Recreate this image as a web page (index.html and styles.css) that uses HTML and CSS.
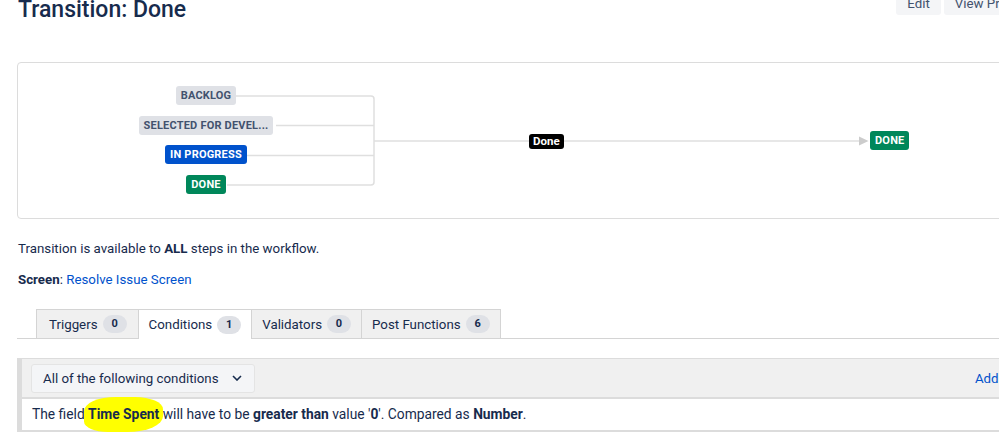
FILE: index.html
```html
<!DOCTYPE html>
<html lang="en">
<head>
  <meta charset="UTF-8">
  <meta name="viewport" content="width=device-width, initial-scale=1.0">
  <title>Transition: Done</title>
  <link rel="stylesheet" href="styles.css">
</head>
<body>
  <div class="page">
    <div class="page-header">
      <h1>Transition: Done</h1>
      <div class="actions">
        <button type="button" class="btn">Edit</button>
        <button type="button" class="btn">View Properties</button>
      </div>
    </div>

    <div class="diagram">
      <svg class="links" width="1000" height="155" viewBox="0 0 1000 155">
        <g fill="none" stroke="#dfdfdf" stroke-width="1.5">
          <path d="M218 33 H353 Q356 33 356 36 V119 Q356 122 353 122 H209"/>
          <path d="M258 62.5 H356"/>
          <path d="M228 92.5 H356"/>
          <path d="M356 78 H841"/>
        </g>
        <polygon points="841,73.5 850.5,78 841,82.5" fill="#cccccc"/>
      </svg>
      <div class="sources">
        <span class="lozenge lozenge-grey">Backlog</span>
        <span class="lozenge lozenge-grey">Selected for devel...</span>
        <span class="lozenge lozenge-blue">In progress</span>
        <span class="lozenge lozenge-green">Done</span>
      </div>
      <span class="transition-name">Done</span>
      <span class="lozenge lozenge-green target">Done</span>
    </div>

    <p class="info">Transition is available to <strong>ALL</strong> steps in the workflow.</p>
    <p class="info"><strong>Screen</strong>: <a href="#">Resolve Issue Screen</a></p>

    <ul class="tabs">
      <li class="tab"><span>Triggers</span><span class="count">0</span></li>
      <li class="tab active"><span>Conditions</span><span class="count">1</span></li>
      <li class="tab"><span>Validators</span><span class="count">0</span></li>
      <li class="tab"><span>Post Functions</span><span class="count">6</span></li>
    </ul>

    <div class="conditions">
      <div class="conditions-header">
        <div class="select">
          <span>All of the following conditions</span>
          <svg width="10" height="6" viewBox="0 0 10 6"><path d="M1 1 L5 5 L9 1" fill="none" stroke="#172b4d" stroke-width="1.6"/></svg>
        </div>
        <a href="#" class="add-link">Add condition</a>
      </div>
      <div class="condition-row">
        The field <strong class="marked">Time Spent</strong> will have to be <strong>greater than</strong> value '<strong>0</strong>'. Compared as <strong>Number</strong>.
      </div>
    </div>
  </div>
</body>
</html>
```

FILE: styles.css
```css
body {
  margin: 0;
  overflow: hidden;
  font-family: Roboto, 'Open Sans', sans-serif;
  font-size: 13.3px;
  color: #172b4d;
  background: #fff;
}
.page {
  width: 1060px;
  padding-left: 17px;
  margin-top: -8px;
}
.page-header {
  display: flex;
  justify-content: space-between;
  align-items: flex-start;
  height: 70px;
}
h1 {
  margin: 0;
  padding-left: 1px;
  font-size: 23px;
  font-weight: 500;
  line-height: 36px;
  color: #172b4d;
}
.actions {
  display: flex;
  gap: 3px;
  padding-right: 18px;
}
.btn {
  background-color: #f4f5f7;
  color: #42526e;
  border: none;
  border-radius: 3px;
  padding: 0 11px;
  height: 23px;
  font-family: inherit;
  font-size: 13.3px;
}
.diagram {
  position: relative;
  height: 155px;
  border: 1px solid #dcdcdc;
  border-radius: 4px;
}
.links {
  position: absolute;
  left: 0;
  top: 0;
}
.sources {
  position: absolute;
  left: 100px;
  top: 23px;
  width: 176px;
  display: flex;
  flex-direction: column;
  align-items: center;
  gap: 10.6px;
}
.lozenge {
  display: inline-block;
  height: 19px;
  line-height: 19px;
  padding: 0 5px;
  border-radius: 3px;
  font-size: 11px;
  font-weight: 700;
  letter-spacing: 0.2px;
  text-transform: uppercase;
  white-space: nowrap;
}
.lozenge-grey {
  background-color: #dfe1e6;
  color: #42526e;
}
.lozenge-blue {
  background-color: #0052cc;
  color: #fff;
}
.lozenge-green {
  background-color: #00875a;
  color: #fff;
}
.transition-name {
  position: absolute;
  left: 511px;
  top: 71px;
  height: 15px;
  line-height: 15px;
  padding: 0 4px;
  border-radius: 3px;
  background: #000;
  color: #fff;
  font-size: 11.5px;
  font-weight: 700;
}
.target {
  position: absolute;
  left: 852px;
  top: 68px;
}
.info {
  margin: 0;
  padding-left: 1px;
  line-height: 20px;
}
.info:first-of-type {
  margin-top: 20px;
}
.info + .info {
  margin-top: 11px;
}
strong {
  font-weight: 700;
}
a {
  color: #0052cc;
  text-decoration: none;
}
.tabs {
  display: flex;
  list-style: none;
  margin: 19px 0 0;
  padding: 0 0 0 19px;
  border-bottom: 1px solid #d4d4d4;
}
.tab {
  display: flex;
  align-items: center;
  gap: 5px;
  height: 28px;
  padding: 0 10px;
  margin-bottom: -1px;
  background-color: #f0f0f0;
  border: 1px solid #d4d4d4;
  border-bottom: none;
  border-left-width: 0;
}
.tab:first-child {
  border-left-width: 1px;
  padding: 0 11px 0 12px;
}
.tab.active {
  background-color: #fff;
  height: 29px;
}
.count {
  display: inline-block;
  min-width: 12px;
  height: 18px;
  line-height: 18px;
  padding: 0 6px;
  border-radius: 9px;
  background-color: #dfe1e6;
  font-size: 11px;
  font-weight: 700;
  text-align: center;
}
.conditions {
  margin-top: 19px;
  border-left: 5px solid #dcdcdc;
  border-top: 1px solid #dcdcdc;
}
.conditions-header {
  display: flex;
  justify-content: space-between;
  align-items: center;
  height: 38px;
  padding: 0 20px 0 9px;
  background-color: #f0f0f0;
  border-bottom: 2px solid #dcdcdc;
}
.select {
  display: flex;
  justify-content: space-between;
  align-items: center;
  box-sizing: border-box;
  width: 224px;
  height: 29px;
  padding: 0 12px 0 11px;
  white-space: nowrap;
  background-color: #f4f5f7;
  border: 1px solid #e4e4e4;
  border-radius: 3px;
}
.condition-row {
  height: 31px;
  line-height: 31px;
  padding-left: 10px;
  font-size: 13.8px;
  border-bottom: 2px solid #dcdcdc;
}
.marked {
  background-color: #ffff00;
  padding: 9px 4px 10px;
  margin: 0 -4px;
  border-radius: 40% 35% 45% 30%;
}
```
